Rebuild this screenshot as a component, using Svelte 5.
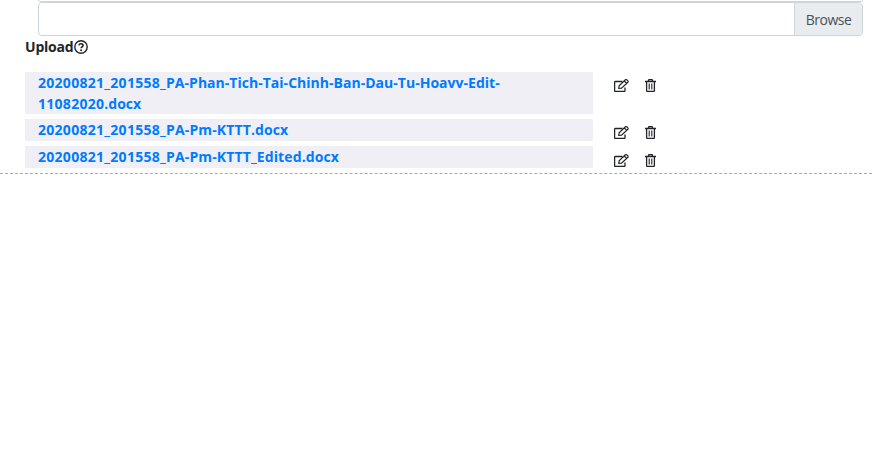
<script>
  const files = [
    [
      { stamp: '20200821_201558_', title: 'PA-Phan-Tich-Tai-Chinh-Ban-Dau-Tu-Hoavv-Edit-', spacing: 0.02 },
      { stamp: '11082020', title: '.docx', spacing: 0.02 }
    ],
    [{ stamp: '20200821_201558_', title: 'PA-Pm-KTTT.docx', spacing: 0.12 }],
    [{ stamp: '20200821_201558_', title: 'PA-Pm-KTTT_Edited.docx', spacing: 0.12 }]
  ];
</script>

<main>
  <div class="previous"></div>
  <div class="picker">
    <div class="field"></div>
    <div class="browse">Browse</div>
  </div>

  <div class="label">
    <span>Upload</span>
    <svg width="14" height="14" viewBox="0 0 14 14" fill="none" stroke="#212529">
      <circle cx="7" cy="7" r="6.2" stroke-width="1.4" />
      <path d="M4.9 5.4C5.1 4.2 6 3.7 7 3.7c1.2 0 2.1.7 2.1 1.7C9.1 6.8 7.1 6.8 7.1 8.3" stroke-width="1.6" />
      <circle cx="7.1" cy="10.2" r="1" fill="#212529" stroke="none" />
    </svg>
  </div>

  <div class="files">
    {#each files as lines}
      <div class="row">
        <div class="name">
          {#each lines as line}
            <div><a href="#file"><span class="stamp">{line.stamp}</span><span style:letter-spacing="{line.spacing}px">{line.title}</span></a></div>
          {/each}
        </div>
        <div class="actions">
          <svg width="15" height="13" viewBox="0 0 15 13" fill="none" stroke="#212529" stroke-width="1.3">
            <path d="M8.5 2.5H1.2a.6.6 0 0 0-.6.6v8.7a.6.6 0 0 0 .6.6h9.2a.6.6 0 0 0 .6-.6V8.5" />
            <path d="M4.8 9.4l.3-2.5L11.4.8a.9.9 0 0 1 1.3 0l1.2 1.1a.9.9 0 0 1 0 1.3L7.5 9.1z M10.3 2l2.4 2.4" stroke-width="1.2" />
          </svg>
          <svg class="trash" width="11" height="13" viewBox="0 0 11 13" fill="none" stroke="#212529" stroke-width="1.3">
            <path d="M0 2.5h11M3.2 2.3L3.9.7h3.2l.7 1.6M1.6 2.5v9.2a.7.7 0 0 0 .7.7h6.4a.7.7 0 0 0 .7-.7V2.5" />
            <path d="M4.2 4.5v6M6.8 4.5v6" stroke-width="1.1" />
          </svg>
        </div>
      </div>
    {/each}
  </div>
  <div class="divider"></div>
</main>

<style>
  :global(body) { margin: 0; background: #fff; }
  main {
    height: 460px;
    overflow: hidden;
    color: #212529;
    font: 14px/21px "Open Sans", "Noto Sans", sans-serif;
  }
  .previous {
    box-sizing: border-box;
    height: 2px;
    margin: 0 11px 0 38px;
    border: 1px solid #ced4da;
    border-top: 0;
    border-radius: 0 0 4px 4px;
  }
  .picker {
    box-sizing: border-box;
    display: flex;
    height: 34px;
    margin: 0 11px 0 38px;
    border: 1px solid #ced4da;
    border-radius: 4px;
    overflow: hidden;
  }
  .field { flex: 1; }
  .browse {
    box-sizing: border-box;
    width: 68px;
    border-left: 1px solid #ced4da;
    background: #e9ecef;
    color: #495057;
    line-height: 34px;
    letter-spacing: -0.5px;
    text-align: center;
  }
  .label {
    display: flex;
    height: 21px;
    margin-left: 25px;
    font-weight: 700;
  }
  .label span { width: 49px; letter-spacing: -0.2px; line-height: 22px; }
  .label svg { margin-top: 4px; }
  .files {
    display: flex;
    flex-direction: column;
    gap: 5px;
    margin: 15px 0 0 25px;
  }
  .row { display: flex; }
  .name {
    box-sizing: border-box;
    width: 568px;
    padding-left: 13px;
    background: #efeff5;
    font-weight: 700;
  }
  .name > div { height: 21px; line-height: 22px; white-space: nowrap; }
  .name > div:only-child { height: 22px; }
  .name a { color: #007bff; text-decoration: none; }
  .stamp { letter-spacing: 0.28px; }
  .actions { display: flex; height: 13px; margin: 7px 0 0 21px; }
  .row:last-child .actions { margin-top: 8px; }
  .trash { margin-left: 16px; }
  .divider { width: 872px; margin-top: 5px; border-top: 1px dashed #aaa7bd; }
</style>
